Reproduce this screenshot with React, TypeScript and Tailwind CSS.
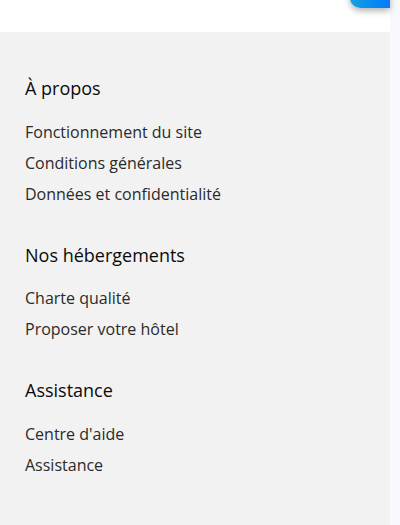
const SECTIONS = [
  {
    title: "À propos",
    links: ["Fonctionnement du site", "Conditions générales", "Données et confidentialité"],
  },
  {
    title: "Nos hébergements",
    links: ["Charte qualité", "Proposer votre hôtel"],
  },
  {
    title: "Assistance",
    links: ["Centre d'aide", "Assistance"],
  },
];

export default function App() {
  return (
    <div className="flex h-[525px] w-[400px] overflow-hidden bg-white font-['Open_Sans','Lato',sans-serif]">
      <div className="flex w-[390px] flex-col">
        {/* top bar with floating button cut off */}
        <div className="relative h-[32px] shrink-0 bg-white">
          <div className="absolute right-0 top-[-20px] h-[28px] w-[40px] rounded-bl-[10px] bg-gradient-to-r from-[#1aa0dc] to-[#0a78ff] shadow-[0_3px_6px_rgba(0,0,0,0.3)]" />
        </div>

        <footer className="flex-1 bg-[#f2f2f2] pl-[25px] pt-[44px]">
          {SECTIONS.map((s, i) => (
            <div key={s.title} className={i > 0 ? "mt-[33px]" : ""}>
              <h3 className="text-[18px] font-medium leading-[24px] text-[#0a0a0a]">{s.title}</h3>
              <ul className="mt-[16.5px]">
                {s.links.map((l) => (
                  <li key={l} className="text-[16px] leading-[31px] text-[#2a2a2a]">
                    {l}
                  </li>
                ))}
              </ul>
            </div>
          ))}
        </footer>
      </div>
      <div className="w-[10px] bg-[#f8f9fc]" />
    </div>
  );
}
